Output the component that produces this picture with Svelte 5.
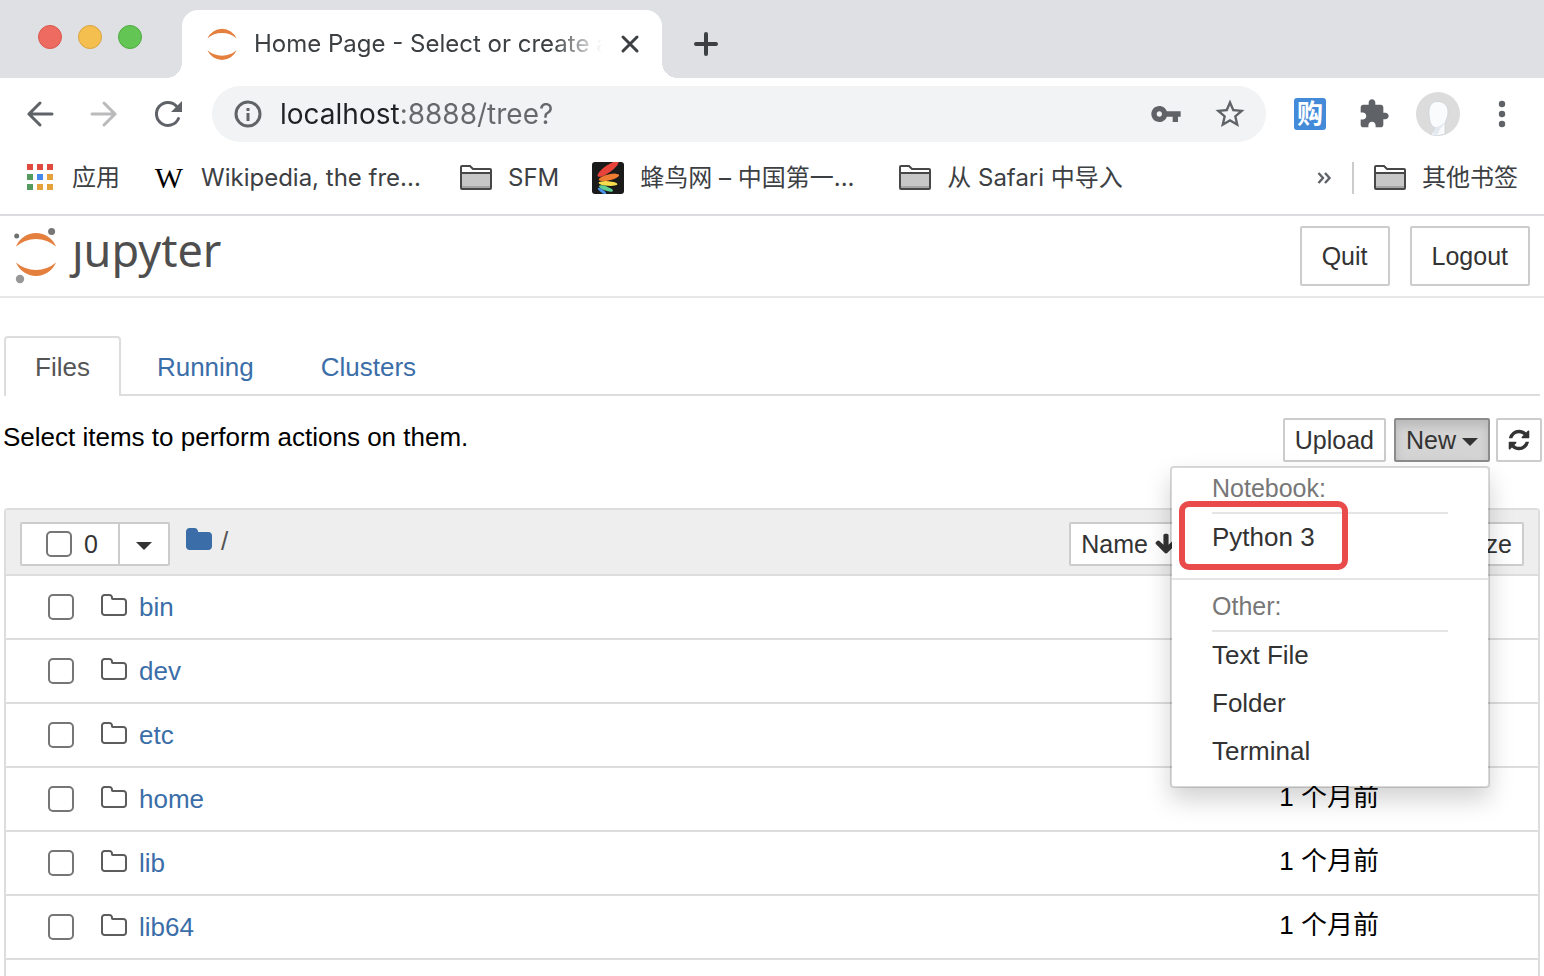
<script>
  const folders = [
    { name: 'bin', modified: '1 个月前' },
    { name: 'dev', modified: '1 个月前' },
    { name: 'etc', modified: '1 个月前' },
    { name: 'home', modified: '1 个月前' },
    { name: 'lib', modified: '1 个月前' },
    { name: 'lib64', modified: '1 个月前' }
  ];
  const appColors = ['#e0493e', '#e0493e', '#e0493e', '#559b60', '#4489ea', '#e3a23c', '#559b60', '#e3a23c', '#e3a23c'];
  let url = $state('localhost:8888/tree?');
</script>

{#snippet bookmarkFolder()}
  <svg class="icon" viewBox="0 0 32 32" aria-hidden="true">
    <path d="M1 12h30v14q0 2-2 2H3q-2 0-2-2z" fill="#c7c7c7" />
    <path d="M2 24h28v2H2z" fill="#a5a5a5" />
    <path d="M1 11V5q0-1 1-1h8l3 3h17q1 0 1 1v18q0 1-1 1H2q-1 0-1-1V11h30" fill="none" stroke="#474747" stroke-width="2" />
  </svg>
{/snippet}

{#snippet planet()}
  <path d="M0 13.500A21.600 21.600 0 0 1 40 13.500A30.400 30.400 0 0 0 0 13.500z" />
  <path d="M0 29.500A21.600 21.600 0 0 0 40 29.500A30.400 30.400 0 0 1 0 29.500z" />
{/snippet}

<div class="window">
  <header class="chrome">
    <div class="strip">
      <div class="lights">
        <button class="light red" aria-label="Close window"></button>
        <button class="light amber" aria-label="Minimise window"></button>
        <button class="light green" aria-label="Zoom window"></button>
      </div>
      <div class="tab">
        <svg class="icon" viewBox="-1 -1 42 44" fill="#e47f3d" aria-hidden="true">{@render planet()}</svg>
        <span class="title">Home Page - Select or create a</span>
        <button class="plain" aria-label="Close tab">
          <svg class="small" viewBox="0 0 24 24" aria-hidden="true"><path d="M5 5l14 14M19 5L5 19" stroke="#3c4043" stroke-width="3" stroke-linecap="round" /></svg>
        </button>
      </div>
      <button class="plain newtab" aria-label="New tab">
        <svg class="small" viewBox="0 0 24 24" aria-hidden="true"><path d="M12 2v20M2 12h20" stroke="#3c4043" stroke-width="4" stroke-linecap="round" /></svg>
      </button>
    </div>

    <div class="toolbar">
      <nav class="history">
        <button class="plain" aria-label="Back">
          <svg class="icon" viewBox="0 0 32 32" fill="none" stroke="#5f6368" stroke-width="3" stroke-linecap="round" aria-hidden="true"><path d="M28 16H5M16 5L5 16l11 11" /></svg>
        </button>
        <button class="plain" aria-label="Forward">
          <svg class="icon" viewBox="0 0 32 32" fill="none" stroke="#bababc" stroke-width="3" stroke-linecap="round" aria-hidden="true"><path d="M4 16h23M16 5l11 11-11 11" /></svg>
        </button>
        <button class="plain" aria-label="Reload">
          <svg class="icon" viewBox="0 0 32 32" aria-hidden="true">
            <path d="M26.500 20.500A11.500 11.500 0 1 1 24.500 8.200" fill="none" stroke="#5f6368" stroke-width="3" stroke-linecap="round" />
            <path d="M30 3v11H19z" fill="#5f6368" />
          </svg>
        </button>
      </nav>
      <div class="address">
        <svg class="icon" viewBox="0 0 32 32" aria-hidden="true">
          <circle cx="16" cy="16" r="12" fill="none" stroke="#616467" stroke-width="3" />
          <path d="M14.500 10h3v3h-3zM14.500 15h3v8h-3z" fill="#616467" />
        </svg>
        <input class="url" aria-label="Address" bind:value={url} spellcheck="false" />
        <button class="plain" aria-label="Passwords">
          <svg class="icon" viewBox="0 0 24 24" fill="#5f6368" aria-hidden="true"><path d="M12.650 10C11.830 7.670 9.610 6 7 6c-3.310 0-6 2.690-6 6s2.690 6 6 6c2.610 0 4.830-1.670 5.650-4H17v4h4v-4h2v-4H12.650zM7 14c-1.100 0-2-.9-2-2s.9-2 2-2 2 .9 2 2-.9 2-2 2z" /></svg>
        </button>
        <button class="plain" aria-label="Bookmark this page">
          <svg class="icon" viewBox="1 1 22 22" fill="#5f6368" aria-hidden="true"><path d="M22 9.240l-7.190-.62L12 2 9.190 8.630 2 9.240l5.460 4.730L5.820 21 12 17.270 18.180 21l-1.630-7.030L22 9.240zM12 15.400l-3.760 2.270 1-4.280-3.320-2.880 4.380-.38L12 6.100l1.710 4.040 4.380.38-3.320 2.880 1 4.280L12 15.400z" /></svg>
        </button>
      </div>
      <div class="extensions">
        <button class="plain shop">购</button>
        <button class="plain" aria-label="Extensions">
          <svg class="icon" viewBox="0 0 24 24" fill="#5f6368" aria-hidden="true"><path d="M20.500 11H19V7c0-1.100-.9-2-2-2h-4V3.500C13 2.120 11.880 1 10.500 1S8 2.120 8 3.500V5H4c-1.100 0-1.990.9-1.990 2v3.800H3.500c1.490 0 2.700 1.210 2.700 2.700s-1.210 2.700-2.700 2.700H2V20c0 1.100.9 2 2 2h3.800v-1.500c0-1.490 1.210-2.700 2.700-2.700 1.490 0 2.700 1.210 2.700 2.700V22H17c1.100 0 2-.9 2-2v-4h1.500c1.380 0 2.500-1.120 2.500-2.500S21.880 11 20.500 11z" /></svg>
        </button>
        <button class="plain" aria-label="Profile">
          <svg class="avatar" viewBox="0 0 44 44" aria-hidden="true">
            <circle cx="22" cy="22" r="22" fill="#dcdcdc" />
            <path d="M13 20C13 12 17 9.500 22 9.500S32 13 32 20c0 5-2 8-3 11v11q-7 3-15 .500c3-2 5-4 5-7-4-.500-6-7-6-15.500z" fill="#fafbfc" stroke="#c4cad2" stroke-width=".6" />
            <path d="M19 35c3 0 7-2 10-5-1 4-5 5-7 12l-6 1c2-2 3-5 3-8z" fill="#e4e9ef" />
          </svg>
        </button>
        <button class="plain" aria-label="Menu">
          <svg class="icon" viewBox="0 0 32 32" fill="#5f6368" aria-hidden="true"><circle cx="16" cy="6" r="3.200" /><circle cx="16" cy="16" r="3.200" /><circle cx="16" cy="26" r="3.200" /></svg>
        </button>
      </div>
    </div>

    <nav class="bookmarks">
      <a href="#apps">
        <svg class="icon" viewBox="0 0 32 32" aria-hidden="true">
          {#each appColors as color, i}
            <rect x={3 + (i % 3) * 10} y={2 + Math.floor(i / 3) * 10} width="6" height="6" fill={color} />
          {/each}
        </svg>
        <span>应用</span>
      </a>
      <a href="#wikipedia"><span class="wiki">W</span><span class="long">Wikipedia, the fre...</span></a>
      <a href="#sfm">{@render bookmarkFolder()}<span>SFM</span></a>
      <a href="#fengniao">
        <svg class="icon" viewBox="0 0 32 32" aria-hidden="true">
          <rect width="32" height="32" rx="3" fill="#1b1a1a" />
          <ellipse cx="16" cy="7" rx="12.500" ry="3.600" transform="rotate(-35 16 7)" fill="#e8433a" />
          <ellipse cx="17" cy="15.300" rx="10.500" ry="2.900" transform="rotate(-13 17 15.300)" fill="#ee7b32" />
          <ellipse cx="16" cy="21.500" rx="9.500" ry="2.300" transform="rotate(4 16 21.500)" fill="#f8dc4b" />
          <ellipse cx="14" cy="26.500" rx="7.500" ry="2.200" transform="rotate(20 14 26.500)" fill="#5fcf94" />
          <ellipse cx="10" cy="29" rx="5" ry="1.600" transform="rotate(36 10 29)" fill="#4a93ea" />
        </svg>
        <span class="long">蜂鸟网 – 中国第一...</span>
      </a>
      <a href="#safari">{@render bookmarkFolder()}<span>从 Safari 中导入</span></a>
      <button class="plain more" aria-label="More bookmarks">
        <svg class="tiny" viewBox="0 0 16 16" fill="none" stroke="#5f6368" stroke-width="2.400" aria-hidden="true"><path d="M2.500 3l4.500 5-4.500 5M9 3l4.500 5L9 13" /></svg>
      </button>
      <a class="other" href="#other">{@render bookmarkFolder()}<span>其他书签</span></a>
    </nav>
  </header>

  <main class="page">
    <header class="brandbar">
      <a class="brand" href="#tree">
        <svg class="logo" viewBox="0 0 44 60" aria-hidden="true">
          <g transform="translate(2 7)" fill="#e47f3d">{@render planet()}</g>
          <circle cx="2.700" cy="10" r="2.500" fill="#6f7070" />
          <circle cx="37.600" cy="5.500" r="3.500" fill="#767677" />
          <circle cx="6" cy="53" r="4.200" fill="#989798" />
        </svg>
        <span class="wordmark">ȷupyter</span>
      </a>
      <div class="session">
        <button class="btn large">Quit</button>
        <button class="btn large">Logout</button>
      </div>
    </header>

    <nav class="tabs">
      <a class="active" href="#files">Files</a>
      <a href="#running">Running</a>
      <a href="#clusters">Clusters</a>
    </nav>

    <div class="actions">
      <p>Select items to perform actions on them.</p>
      <div class="tools">
        <button class="btn upload">Upload</button>
        <div class="dropdown">
          <button class="btn open" aria-expanded="true">New <span class="caret"></span></button>
          <div class="menu">
            <h2>Notebook:</h2>
            <a class="marked" href="#python3">Python 3</a>
            <hr />
            <h2 class="second">Other:</h2>
            <a href="#text">Text File</a>
            <a href="#folder">Folder</a>
            <a href="#terminal">Terminal</a>
          </div>
        </div>
        <button class="btn square" aria-label="Refresh">
          <svg class="small" viewBox="0 0 1792 1792" fill="#333" aria-hidden="true"><path d="M1639 1056q0 5-1 7-64 268-268 434.500t-478 166.500q-146 0-282.500-55t-243.500-157l-129 129q-19 19-45 19t-45-19-19-45v-448q0-26 19-45t45-19h448q26 0 45 19t19 45-19 45l-137 137q71 66 161 102t187 36q134 0 250-65t186-179q11-17 53-117 8-23 30-23h192q13 0 22.500 9.500t9.500 22.500zm25-800v448q0 26-19 45t-45 19h-448q-26 0-45-19t-19-45 19-45l138-138q-148-137-349-137-134 0-250 65t-186 179q-11 17-53 117-8 23-30 23h-199q-13 0-22.500-9.500t-9.500-22.500v-7q65-268 270-434.500t480-166.500q146 0 284 55.500t245 156.500l130-129q19-19 45-19t45 19 19 45z" /></svg>
        </button>
      </div>
    </div>

    <div class="list">
      <table>
        <thead>
          <tr>
            <th class="name">
              <div class="head">
                <div class="group">
                  <label class="btn select"><input type="checkbox" aria-label="Select all" />0</label>
                  <button class="btn toggle" aria-label="Select by type"><span class="caret"></span></button>
                </div>
                <a class="crumb" href="#root" aria-label="Root folder">
                  <svg class="glyph" viewBox="0 0 1792 1792" fill="#3b6ea8" aria-hidden="true"><path d="M1728 608v704q0 92-66 158t-158 66h-1216q-92 0-158-66t-66-158v-960q0-92 66-158t158-66h320q92 0 158 66t66 158v32h672q92 0 158 66t66 158z" /></svg>
                </a>
                <span class="slash">/</span>
                <button class="btn sort">Name
                  <svg class="small" viewBox="0 0 1792 1792" fill="#333" aria-hidden="true"><path d="M1675 832q0 53-37 90l-651 652q-39 37-91 37-53 0-90-37l-651-652q-38-36-38-90 0-53 38-91l74-75q39-37 91-37 53 0 90 37l294 294v-704q0-52 38-90t90-38h128q52 0 90 38t38 90v704l294-294q37-37 90-37 52 0 91 37l75 75q37 39 37 91z" /></svg>
                </button>
              </div>
            </th>
            <th class="date"><button class="btn">Last Modified</button></th>
            <th class="size"><button class="btn">File size</button></th>
          </tr>
        </thead>
        <tbody>
          {#each folders as folder}
            <tr>
              <td>
                <div class="entry">
                  <input type="checkbox" aria-label={folder.name} />
                  <svg class="glyph" viewBox="0 0 1792 1792" fill="#5c5c5c" aria-hidden="true"><path d="M1600 1312v-704q0-40-28-68t-68-28h-704q-40 0-68-28t-28-68v-64q0-40-28-68t-68-28h-320q-40 0-68 28t-28 68v960q0 40 28 68t68 28h1216q40 0 68-28t28-68zm128-704v704q0 92-66 158t-158 66h-1216q-92 0-158-66t-66-158v-960q0-92 66-158t158-66h320q92 0 158 66t66 158v32h672q92 0 158 66t66 158z" /></svg>
                  <a href="#{folder.name}">{folder.name}</a>
                </div>
              </td>
              <td class="date">{folder.modified}</td>
              <td></td>
            </tr>
          {/each}
          <tr><td colspan="3"></td></tr>
        </tbody>
      </table>
    </div>
  </main>
</div>

<style>
  :global(body) { margin: 0; background: #fff; }
  .window, .window *, .marked::after { box-sizing: border-box; }
  .window {
    display: flex;
    flex-direction: column;
    height: 100vh;
    overflow: hidden;
    background: #fff;
    color: #000;
    font: 26px/36px "Liberation Sans", "Noto Sans CJK SC", sans-serif;
  }
  a { color: #3b6ea8; text-decoration: none; }
  button, input { font: inherit; color: inherit; }
  svg { display: block; flex: none; }
  .icon { width: 32px; height: 32px; }
  .small { width: 24px; height: 24px; }
  .tiny { width: 16px; height: 16px; }
  .glyph { width: 28px; height: 28px; }
  .plain { display: block; padding: 0; border: 0; background: none; flex: none; }

  .chrome { flex: none; font-family: Inter, "Noto Sans CJK SC", sans-serif; font-size: 24px; color: #3c4043; border-bottom: 2px solid #dadce0; }
  .strip { display: flex; align-items: center; height: 78px; background: #dee0e4; }
  .lights { display: flex; gap: 16px; width: 182px; padding: 0 0 4px 38px; }
  .light { width: 24px; height: 24px; padding: 0; border: 1px solid; border-radius: 50%; }
  .red { background: #ed6b60; border-color: #d8584d; }
  .amber { background: #f5bf4f; border-color: #d9a43e; }
  .green { background: #62c554; border-color: #50aa41; }
  .tab { position: relative; display: flex; align-items: center; gap: 16px; align-self: flex-end; width: 480px; height: 68px; padding: 0 20px 0 24px; background: #fff; border-radius: 16px 16px 0 0; }
  .tab::before, .tab::after { content: ""; position: absolute; bottom: 0; width: 16px; height: 16px; }
  .tab::before { right: 100%; background: radial-gradient(circle at 0 0, #dee0e4 16px, #fff 16px); }
  .tab::after { left: 100%; background: radial-gradient(circle at 100% 0, #dee0e4 16px, #fff 16px); }
  .title { flex: 1; min-width: 0; overflow: hidden; white-space: nowrap; mask-image: linear-gradient(90deg, #000 86%, transparent); }
  .newtab { margin: 10px 0 0 32px; }

  .toolbar { display: flex; align-items: center; gap: 28px; height: 72px; padding: 0 26px 0 24px; }
  .history { display: flex; gap: 32px; }
  .address { display: flex; flex: 1; align-items: center; gap: 32px; min-width: 0; height: 56px; padding: 0 20px; border-radius: 28px; background: #f1f3f4; }
  .url { flex: 1; min-width: 0; margin-left: -16px; padding: 0; border: 0; outline: 0; font-size: 28px; color: transparent; background: linear-gradient(90deg, #202124 120px, #66686b 120px); background-clip: text; -webkit-background-clip: text; }
  .extensions { display: flex; align-items: center; gap: 26px; }
  .shop { width: 32px; height: 32px; margin-right: 6px; border-radius: 3px; background: #438ad8; color: #fff; font-size: 26px; font-weight: 700; line-height: 30px; }
  .avatar { width: 44px; height: 44px; }

  .bookmarks { display: flex; align-items: center; gap: 33px; height: 64px; padding: 0 26px 8px 24px; white-space: nowrap; }
  .bookmarks a { display: flex; align-items: center; gap: 16px; color: #3c4043; }
  .long { width: 226px; }
  .wiki { width: 32px; text-align: center; color: #000; font: 30px/32px "Liberation Serif", serif; }
  .more { margin-left: auto; margin-right: -13px; }
  .bookmarks .other { padding-left: 20px; border-left: 2px solid #ccc; line-height: 32px; }

  .page { flex: 1; min-height: 0; overflow: hidden; }
  .brandbar { display: flex; justify-content: space-between; height: 82px; padding: 10px 14px; border-bottom: 2px solid #e7e7e7; }
  .brand { display: flex; align-items: center; gap: 14px; color: #4e4e4e; }
  .logo { width: 44px; height: 60px; }
  .wordmark { padding-bottom: 12px; font: 45px/48px "Noto Sans", sans-serif; }
  .session { display: flex; gap: 20px; }
  .btn { display: flex; align-items: center; justify-content: center; gap: 6px; height: 44px; padding: 0 10px; border: 2px solid #ccc; border-radius: 2px; background: #fff; color: #333; font-size: 25px; line-height: 36px; white-space: nowrap; }
  .btn.large { height: 60px; padding: 0 20px; }

  .tabs { display: flex; gap: 5px; margin: 38px 4px 0; border-bottom: 2px solid #ddd; }
  .tabs a { height: 60px; margin-bottom: -2px; padding: 11px 29px; border: 2px solid transparent; border-bottom: 0; }
  .tabs .active { color: #555; background: #fff; border-color: #ddd; border-radius: 4px 4px 0 0; }

  .actions { display: flex; justify-content: space-between; align-items: flex-start; padding: 22px 2px 46px 3px; }
  .actions p { margin: 0; line-height: 38px; }
  .tools { display: flex; gap: 6px; }
  .upload { margin-right: 2px; }
  .dropdown { position: relative; }
  .btn.open { background: #d4d4d4; border-color: #8c8c8c; box-shadow: inset 0 6px 10px rgba(0, 0, 0, .125); }
  .btn.square { width: 46px; padding: 0; }
  .caret { border: 8px solid transparent; border-top-color: #333; border-bottom: 0; margin-top: 4px; }
  .menu { position: absolute; z-index: 2; top: 48px; right: 0; width: 320px; padding-bottom: 10px; border: 2px solid rgba(0, 0, 0, .15); border-radius: 4px; background: #fff; background-clip: padding-box; box-shadow: 0 12px 24px rgba(0, 0, 0, .175); }
  .menu h2 { margin: 0 40px; padding-bottom: 4px; border-bottom: 2px solid #e5e5e5; color: #777; font-size: 25px; font-weight: 400; line-height: 40px; }
  .menu .second { padding-top: 6px; }
  .menu a { display: block; padding: 0 40px 2px; color: #333; line-height: 46px; }
  .menu hr { margin: 16px 0 0; border: 0; border-top: 2px solid #e5e5e5; }
  .marked { position: relative; }
  .marked::after { content: ""; position: absolute; left: 7px; top: -13px; width: 169px; height: 69px; border: 6px solid #e94b4b; border-radius: 10px; }

  .list { margin: 0 4px; border: 2px solid #ddd; border-radius: 4px 4px 0 0; }
  table { width: 100%; table-layout: fixed; border-collapse: collapse; }
  th, td { padding: 0; font-weight: 400; text-align: left; }
  th { height: 65px; padding-top: 4px; background: #eee; }
  th.date { width: 192px; }
  th.size { width: 156px; padding-right: 14px; }
  th > .btn { margin-left: auto; }
  td { height: 64px; border-top: 2px solid #ddd; }
  td.date { padding: 0 3px 4px 0; text-align: right; }
  .head { display: flex; align-items: center; padding-left: 14px; }
  .group { display: flex; margin-right: 15px; }
  .select { width: 100px; padding-left: 14px; gap: 12px; border-radius: 2px 0 0 2px; }
  .toggle { width: 52px; margin-left: -2px; border-radius: 0 2px 2px 0; }
  .crumb { margin-bottom: 8px; }
  .slash { margin: 0 auto 6px 8px; color: #555; }
  input[type="checkbox"] { appearance: none; flex: none; width: 26px; height: 26px; margin: 0; border: 2px solid #767676; border-radius: 5px; background: #fff; }
  .entry { display: flex; align-items: center; padding-left: 42px; }
  .entry .glyph { margin: 0 11px 2px 26px; }
</style>
